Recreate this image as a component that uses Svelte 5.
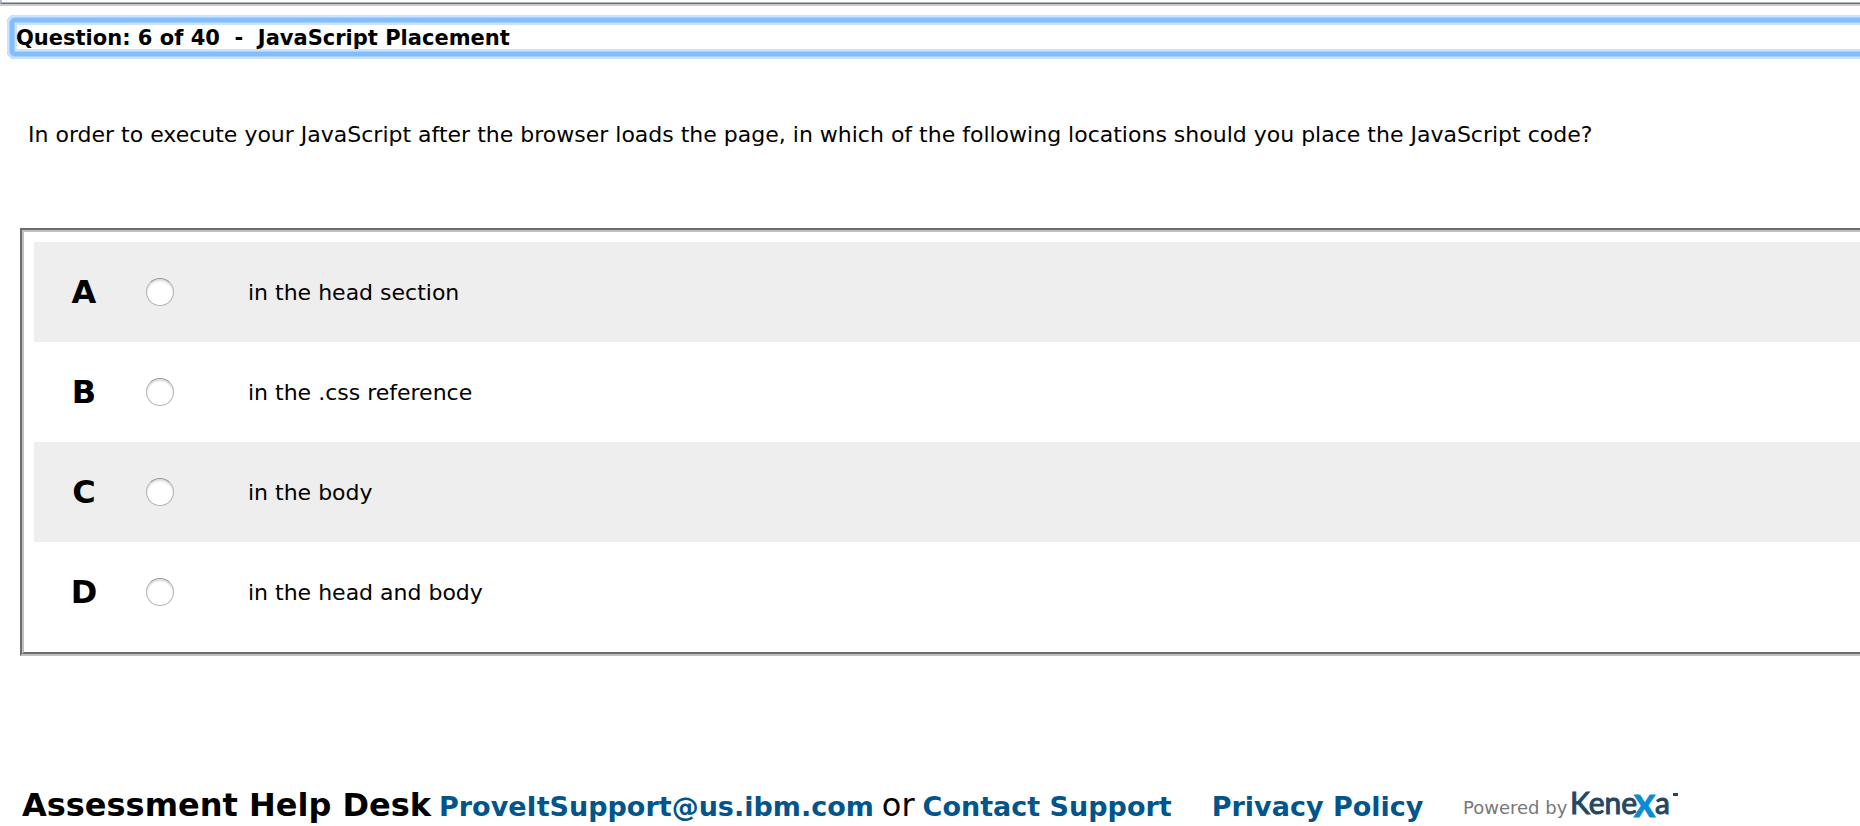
<script>
  const options = [
    { key: 'A', text: 'in the head section' },
    { key: 'B', text: 'in the .css reference' },
    { key: 'C', text: 'in the body' },
    { key: 'D', text: 'in the head and body' }
  ];
  let answer = $state('');
</script>

<div class="frame-edge"></div>

<main>
  <h1 tabindex="-1">Question: 6 of 40&nbsp; -&nbsp; JavaScript Placement</h1>

  <p class="question" id="question">
    In order to execute your JavaScript after the browser loads the page, in which of the following locations should you place the JavaScript code?
  </p>

  <div class="options" role="radiogroup" aria-labelledby="question">
    {#each options as option}
      <label class="option">
        <span class="key">{option.key}</span>
        <input type="radio" name="answer" value={option.key} bind:group={answer} />
        <span class="text">{option.text}</span>
      </label>
    {/each}
  </div>
</main>

<footer>
  <strong>Assessment Help Desk</strong>
  <a href="mailto:ProveItSupport@us.ibm.com">ProveItSupport@us.ibm.com</a>
  <span class="or">or</span>
  <a href="#contact">Contact Support</a>
  <a class="policy" href="#privacy">Privacy Policy</a>
  <svg class="powered" width="216" height="28" viewBox="0 0 216 28">
    <text class="by" x="-2" y="26">Powered by</text>
    <text class="brand" x="105" y="26">Kene</text>
    <text class="brand" x="190" y="26">a</text>
    <text class="x" x="169" y="29">X</text>
    <rect x="208" y="5" width="5" height="3" fill="#24475f" />
  </svg>
</footer>

<style>
  :global(body) {
    background: #fff;
    color: #000;
    font-family: 'DejaVu Sans', Verdana, sans-serif;
    overflow: hidden;
  }

  .frame-edge {
    height: 3px;
    border-left: 2px solid #b4b8c4;
    border-bottom: 1px solid #656a7c;
    box-shadow: inset 0 -1px #b0b6c8, 0 2px #ccc;
  }

  main {
    padding-top: 11px;
  }

  h1 {
    margin: 0 -12px 0 7px;
    padding: 10px 9px 8px;
    border-radius: 8px;
    box-shadow:
      inset 0 0 0 2px #cbe3ff,
      inset 0 0 0 3px #a6d0ff,
      inset 0 0 0 7px #82bdff,
      inset 0 0 0 8px #a6d0ff,
      inset 0 0 0 10px #cbe3ff;
    font-size: 21px;
    line-height: 26px;
    white-space: nowrap;
    outline: none;
  }

  .question {
    margin: 62px 28px 0;
    font-size: 22px;
    line-height: 28px;
  }

  .options {
    margin: 79px 0 0 20px;
    padding: 10px 0 10px 10px;
    border: 4px groove #c0c0c0;
    border-right: 0;
  }

  .option {
    display: grid;
    grid-template-columns: 100px 50px 1fr;
    align-items: center;
    height: 100px;
  }

  .option:nth-child(odd) {
    background: #eee;
  }

  .key {
    text-align: center;
    font-size: 32px;
    font-weight: bold;
  }

  input {
    appearance: none;
    width: 28px;
    height: 28px;
    margin: 0 0 0 12px;
    border: 1px solid #b4b4b4;
    border-top-color: #999;
    border-radius: 50%;
    background: #fff;
    box-shadow: inset 0 2px 2px #ddd;
  }

  input:checked {
    background: radial-gradient(#333 5px, #fff 6px);
  }

  .text {
    margin-left: 64px;
    font-size: 22px;
  }

  footer {
    display: flex;
    align-items: baseline;
    margin: 130px 22px 0;
    white-space: nowrap;
    font-size: 32px;
  }

  a {
    margin-left: 8px;
    color: #00558c;
    font-size: 27px;
    font-weight: bold;
    text-decoration: none;
  }

  .or {
    margin-left: 8px;
  }

  .policy {
    margin-left: 40px;
  }

  .powered {
    flex: none;
    margin-left: 42px;
    overflow: visible;
  }

  .by {
    fill: #777;
    font: 18px 'DejaVu Sans', Verdana, sans-serif;
  }

  .brand {
    fill: #24475f;
    font: 30px Lato, sans-serif;
    stroke: #24475f;
    stroke-width: 1px;
  }

  .x {
    fill: #0a8bd6;
    font: 900 31px Lato, sans-serif;
    stroke: #0a8bd6;
    stroke-width: 1px;
  }
</style>
